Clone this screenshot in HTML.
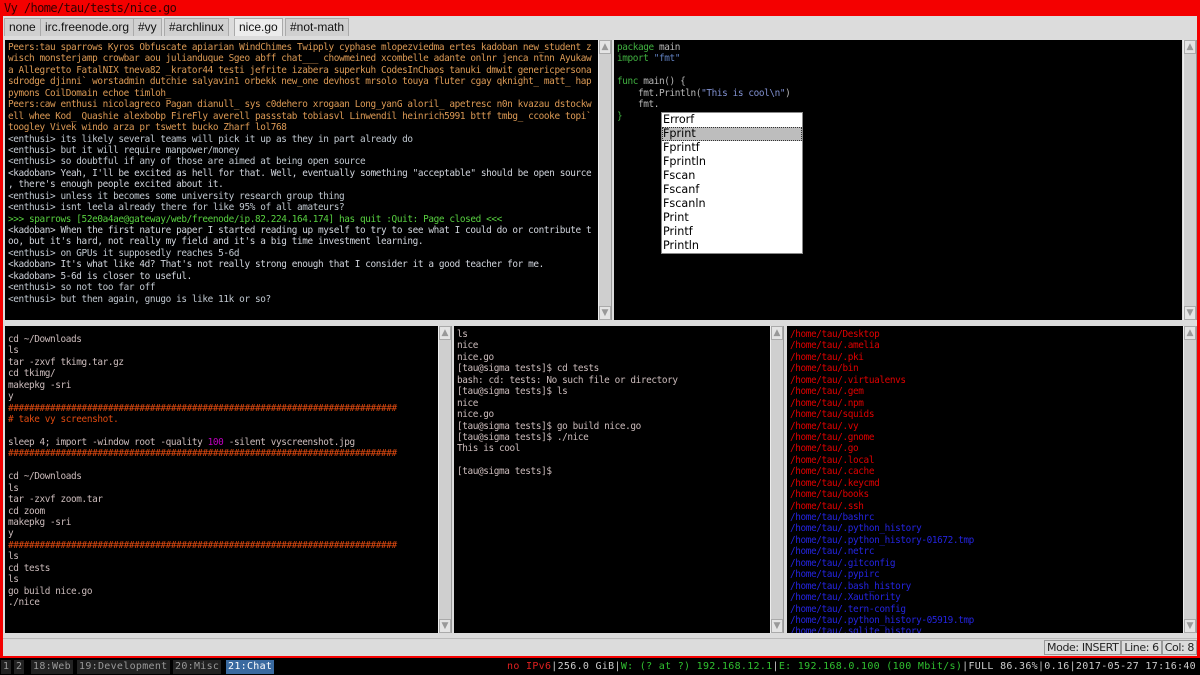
<!DOCTYPE html>
<html><head><meta charset="utf-8"><style>
*{margin:0;padding:0;box-sizing:border-box}
body{width:1200px;height:675px;background:#000;position:relative;overflow:hidden;font-family:"DejaVu Sans Mono","Liberation Mono",monospace}
.a{position:absolute}
.t{position:absolute;background:#000;overflow:hidden;font-size:9.4px;letter-spacing:-0.39px;line-height:11.43px;white-space:pre}
.sb{position:absolute;background:#cfcfcf;border-left:1px solid #eee;border-right:1px solid #999}
.sb .u,.sb .d{position:absolute;left:0;width:12px;height:14px;background:#e4e4e4;border:1px solid #aaa;color:#999;font-size:9px;text-align:center;line-height:12px;font-family:"DejaVu Sans",sans-serif}
.sb .u{top:0}.sb .d{bottom:0}
.tab{position:absolute;top:18px;height:18px;font:12px "Liberation Sans","DejaVu Sans",sans-serif;line-height:17px;padding:0 4px;background:#d0d0d0;border:1px solid #aaa;border-bottom:none;color:#111}
.o{color:#dc9a55}.g{color:#c0c8d0}.w{color:#d0d4dc}.gr{color:#58d040}
.p{color:#ccbcbc}.h{color:#e04a10}.m{color:#c000c0}
.r{color:#e00000}.b{color:#2424e0}
.pop{position:absolute;left:661px;top:112px;width:142px;height:142px;background:#fff;border:1px solid #888;font:11.2px "DejaVu Sans",sans-serif;line-height:14px;color:#000}
.pop div{padding-left:1px;height:14px}
.ws{position:absolute;top:660px;height:14px;font-size:10px;letter-spacing:0.3px;line-height:14px;color:#999;background:#222;padding:0 2px;white-space:nowrap}
</style></head><body>
<div class="a" style="left:0;top:0;width:1200px;height:658px;background:#f40000"></div>
<div class="a" style="left:3px;top:16px;width:1194px;height:640px;background:#dcdcdc"></div>
<div class="a" style="left:4px;top:0;font:12px 'DejaVu Sans Mono',monospace;letter-spacing:-0.6px;line-height:16px;color:#300">Vy /home/tau/tests/nice.go</div>
<div class="tab" style="left:4px">none</div>
<div class="tab" style="left:40px">irc.freenode.org</div>
<div class="tab" style="left:133px">#vy</div>
<div class="tab" style="left:164px">#archlinux</div>
<div class="tab" style="left:234px;background:#ececec">nice.go</div>
<div class="tab" style="left:285px">#not-math</div>

<div class="t" style="left:5px;top:40px;width:593px;height:280px;padding:2px 3px"><span class="o">Peers:tau sparrows Kyros Obfuscate apiarian WindChimes Twipply cyphase mlopezviedma ertes kadoban new_student z
wisch monsterjamp crowbar aou julianduque Sgeo abff chat___ chowmeined xcombelle adante onlnr jenca ntnn Ayukaw
a Allegretto FatalNIX tneva82 _krator44 testi jefrite izabera superkuh CodesInChaos tanuki dmwit genericpersona
sdrodge djinni` worstadmin dutchie salyavin1 orbekk new_one devhost mrsolo touya fluter cgay qknight_ matt_ hap
pymons CoilDomain echoe timloh_
Peers:caw enthusi nicolagreco Pagan dianull_ sys c0dehero xrogaan Long_yanG aloril_ apetresc n0n kvazau dstockw
ell whee Kod_ Quashie alexbobp FireFly averell passstab tobiasvl Linwendil heinrich5991 bttf tmbg_ ccooke topi`
toogley Vivek windo arza pr tswett bucko Zharf lol768</span>
<span class="g">&lt;enthusi&gt; its likely several teams will pick it up as they in part already do
&lt;enthusi&gt; but it will require manpower/money
&lt;enthusi&gt; so doubtful if any of those are aimed at being open source</span>
<span class="w">&lt;kadoban&gt; Yeah, I'll be excited as hell for that. Well, eventually something "acceptable" should be open source
, there's enough people excited about it.</span>
<span class="g">&lt;enthusi&gt; unless it becomes some university research group thing
&lt;enthusi&gt; isnt leela already there for like 95% of all amateurs?</span>
<span class="gr">&gt;&gt;&gt; sparrows [52e0a4ae@gateway/web/freenode/ip.82.224.164.174] has quit :Quit: Page closed &lt;&lt;&lt;</span>
<span class="w">&lt;kadoban&gt; When the first nature paper I started reading up myself to try to see what I could do or contribute t
oo, but it's hard, not really my field and it's a big time investment learning.</span>
<span class="g">&lt;enthusi&gt; on GPUs it supposedly reaches 5-6d</span>
<span class="w">&lt;kadoban&gt; It's what like 4d? That's not really strong enough that I consider it a good teacher for me.
&lt;kadoban&gt; 5-6d is closer to useful.</span>
<span class="g">&lt;enthusi&gt; so not too far off
&lt;enthusi&gt; but then again, gnugo is like 11k or so?</span></div>
<div class="sb" style="left:598px;top:40px;width:14px;height:280px"><div class="u">▲</div><div class="d">▼</div></div>

<div class="t" style="left:614px;top:40px;width:568px;height:280px;padding:2px 3px"><span style="color:#40b040">package</span><span style="color:#b8b8b8"> main</span>
<span style="color:#40b040">import</span> <span style="color:#6080c0">"fmt"</span>

<span style="color:#40b040">func</span><span style="color:#b8b8b8"> main() {
    fmt.Println(</span><span style="color:#8090d0">"This is cool\n"</span><span style="color:#b8b8b8">)
    fmt.</span>
<span style="color:#40b040">}</span></div>
<div class="sb" style="left:1183px;top:40px;width:14px;height:280px"><div class="u">▲</div><div class="d">▼</div></div>
<div class="pop"><div>Errorf</div><div style="background:#bdbdbd;outline:1px dotted #333;outline-offset:-1px">Fprint</div><div>Fprintf</div><div>Fprintln</div><div>Fscan</div><div>Fscanf</div><div>Fscanln</div><div>Print</div><div>Printf</div><div>Println</div></div>

<div class="t" style="left:5px;top:326px;width:433px;height:307px;padding:8px 3px"><span class="p">cd ~/Downloads
ls
tar -zxvf tkimg.tar.gz
cd tkimg/
makepkg -sri
y</span>
<span class="h">##########################################################################
# take vy screenshot.</span>

<span class="p">sleep 4; import -window root -quality <span class="m">100</span> -silent vyscreenshot.jpg</span>
<span class="h">##########################################################################</span>

<span class="p">cd ~/Downloads
ls
tar -zxvf zoom.tar
cd zoom
makepkg -sri
y</span>
<span class="h">##########################################################################</span>
<span class="p">ls
cd tests
ls
go build nice.go
./nice</span></div>
<div class="sb" style="left:438px;top:326px;width:14px;height:307px"><div class="u">▲</div><div class="d">▼</div></div>

<div class="t" style="left:454px;top:326px;width:316px;height:307px;padding:3px 3px"><span class="p">ls
nice
nice.go
[tau@sigma tests]$ cd tests
bash: cd: tests: No such file or directory
[tau@sigma tests]$ ls
nice
nice.go
[tau@sigma tests]$ go build nice.go
[tau@sigma tests]$ ./nice
This is cool

[tau@sigma tests]$</span></div>
<div class="sb" style="left:770px;top:326px;width:14px;height:307px"><div class="u">▲</div><div class="d">▼</div></div>

<div class="t" style="left:787px;top:326px;width:396px;height:307px;padding:3px 3px"><span class="r">/home/tau/Desktop
/home/tau/.amelia
/home/tau/.pki
/home/tau/bin
/home/tau/.virtualenvs
/home/tau/.gem
/home/tau/.npm
/home/tau/squids
/home/tau/.vy
/home/tau/.gnome
/home/tau/.go
/home/tau/.local
/home/tau/.cache
/home/tau/.keycmd
/home/tau/books
/home/tau/.ssh</span>
<span class="b">/home/tau/bashrc
/home/tau/.python_history
/home/tau/.python_history-01672.tmp
/home/tau/.netrc
/home/tau/.gitconfig
/home/tau/.pypirc
/home/tau/.bash_history
/home/tau/.Xauthority
/home/tau/.tern-config
/home/tau/.python_history-05919.tmp
/home/tau/.sqlite_history</span></div>
<div class="sb" style="left:1183px;top:326px;width:14px;height:307px"><div class="u">▲</div><div class="d">▼</div></div>

<div class="a" style="left:3px;top:638px;width:1194px;height:18px;background:#dcdcdc;border-top:1px solid #bbb"></div>
<div class="a" style="right:3px;top:640px;height:16px;font:11px 'DejaVu Sans',sans-serif;letter-spacing:-0.4px;line-height:15px;color:#222;white-space:nowrap">
<span style="border:1px solid #999;padding:0 2px">Mode: INSERT</span><span style="border:1px solid #999;padding:0 2px">Line: 6</span><span style="border:1px solid #999;padding:0 2px">Col: 8</span></div>

<div class="ws" style="left:1px">1</div>
<div class="ws" style="left:14px">2</div>
<div class="ws" style="left:31px">18:Web</div>
<div class="ws" style="left:77px">19:Development</div>
<div class="ws" style="left:173px">20:Misc</div>
<div class="ws" style="left:226px;background:#3a6aa0;color:#fff">21:Chat</div>
<div class="a" style="right:4px;top:660px;font-size:10px;letter-spacing:0.3px;line-height:14px;white-space:pre;color:#ccc"><span style="color:#e02020">no IPv6</span>|256.0 GiB|<span style="color:#30c030">W: (? at ?) 192.168.12.1</span>|<span style="color:#30c030">E: 192.168.0.100 (100 Mbit/s)</span>|FULL 86.36%|0.16|2017-05-27 17:16:40</div>
</body></html>
